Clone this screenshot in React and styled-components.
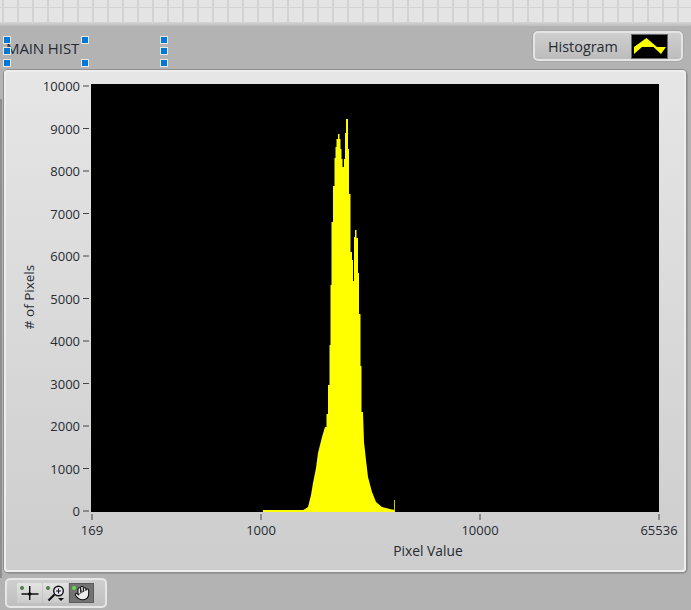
import React from 'react'
import styled, { createGlobalStyle } from 'styled-components'
import { Hand } from 'lucide-react'

const GlobalStyle = createGlobalStyle`
  html, body {
    margin: 0;
    height: 100%;
    background: #b3b3b3;
    overflow: hidden;
  }
  body {
    font-family: "Open Sans", "Noto Sans", sans-serif;
    font-size: 13px;
    color: #262b33;
  }
`

const Page = styled.div`
  position: relative;
  width: 691px;
  height: 610px;
  display: flex;
  flex-direction: column;
`

const GridStrip = styled.div`
  height: 22px;
  background-color: #e4e4e4;
  background-image:
    linear-gradient(to right, #d3d3d3 2px, transparent 2px),
    linear-gradient(to bottom, #d3d3d3 1px, transparent 1px);
  background-size: 15px 15px;
  background-position: 2px 7px;
`

const StripFade = styled.div`
  height: 4px;
  background: linear-gradient(#d6d6d6, #bdbdbd);
`

const EdgeBand = styled.div`
  position: absolute;
  left: 0;
  top: 99px;
  width: 2px;
  height: 479px;
  background: #8f8f8f;
`

const Header = styled.header`
  height: 44px;
  display: flex;
  align-items: flex-start;
  justify-content: space-between;
  padding: 0 8px 0 7px;
`

const LabelBox = styled.div`
  position: relative;
  margin-top: 13px;
  line-height: 18px;
  font-size: 15px;
  letter-spacing: -0.1px;
  margin-left: -1px;
`

const Handle = styled.span`
  position: absolute;
  left: ${p => p.$x - 3}px;
  top: ${p => p.$y - 4}px;
  width: 6px;
  height: 6px;
  background: #0078d7;
  border: 1px solid #e8e8e8;
`

const PlotSelector = styled.div`
  margin-top: 5px;
  width: 150px;
  height: 30px;
  box-sizing: border-box;
  display: flex;
  align-items: center;
  justify-content: space-between;
  padding: 0 14px 0 13px;
  border: 2px solid #e4e4e4;
  border-radius: 5px;
  background: linear-gradient(#cfcfcf, #bcbcbc);
  box-shadow: 0 0 0 1px #a8a8a8;
  font-size: 14.4px;
`

const Swatch = styled.svg`
  display: block;
  width: 35px;
  height: 23px;
  background: #000;
  outline: 1px solid #666;
`

const Panel = styled.section`
  margin: 0 5px 0 4px;
  height: 502px;
  border-radius: 4px;
  background: linear-gradient(#e6e6e6, #cdcdcd);
  box-shadow: inset 0 0 0 2px #eeeeee, 0 0 0 1px #8e8e8e, 1px 1px 1px 1px #999;
`

const Chart = styled.svg`
  display: block;
  width: 682px;
  height: 502px;
  font-family: "Open Sans", "Noto Sans", sans-serif;
  font-size: 13px;
  fill: #262b33;
`

const Tick = styled.line`
  stroke: #444;
  stroke-width: 1;
`

const Toolbar = styled.div`
  margin: 6px 0 0 5px;
  width: 102px;
  height: 30px;
  box-sizing: border-box;
  display: flex;
  gap: 1px;
  align-items: center;
  padding: 0 10px;
  border: 2px solid #e6e6e6;
  border-radius: 5px;
  background: linear-gradient(#cfcfcf, #bfbfbf);
`

const ToolButton = styled.div`
  position: relative;
  flex: 0 0 25px;
  height: 20px;
  display: flex;
  align-items: center;
  justify-content: center;
  background: ${p => (p.$active ? '#737373' : 'linear-gradient(#e4e4e4, #cacaca)')};
  box-shadow: ${p => (p.$active ? 'inset 0 0 0 1px #5c5c5c' : 'none')};
`

const Led = styled.span`
  position: absolute;
  left: 3px;
  top: 3px;
  width: 4px;
  height: 4px;
  border-radius: 50%;
  background: ${p => (p.$on ? '#5fe03a' : '#4d7d45')};
`

const ToolIcon = styled.svg`
  display: block;
  width: 25px;
  height: 20px;
`

const yValues = [10000, 9000, 8000, 7000, 6000, 5000, 4000, 3000, 2000, 1000, 0]
const xValues = [
  { label: '169', x: 92 },
  { label: '1000', x: 261 },
  { label: '10000', x: 480 },
  { label: '65536', x: 659 },
]

const histogram = `M263 512 V510 H303 L305 509 L308 507 L311 495 L313 483 L316 468 L318 453
  L320 445 L322 437 L325 427 H326.5 V414 H328 V385 H329.5 V345 H330.5 V285 H331.5 V222
  H333 V186 H334.5 V158 H335.5 V147 H336.5 V139 H338 V134 H339.5 V139 H340.5 V149
  H341.5 V159 H342.5 V167 H344 V159 H345 V133 H346 V119 H348 V149 H349 V194 H350.5 V252
  H352 V260 H353 V281 H354 V237 H355 V230 H356.5 V238 H358 V273 H359 V314 H360.5 V366
  H361.5 V412 H363 L364 442 L366 460 L368 477 L372 492 L376 502 L382 507 L392 509.5
  L395 510 V512 Z`

const HistChart = () => (
  <Chart viewBox="4 70 682 502">
    <rect x="91" y="84" width="568" height="428" fill="#000" />
    <path d={histogram} fill="#ffff00" />
    <rect x="394" y="500" width="1" height="11" fill="#c9c900" />

    {yValues.map((v, i) => {
      const y = 86 + i * 42.5
      return (
        <g key={v}>
          <Tick x1="83" x2="89" y1={y} y2={y} />
          <text x="80" y={y + 5} textAnchor="end">{v}</text>
        </g>
      )
    })}
    {xValues.map(t => (
      <g key={t.label}>
        <Tick x1={t.x} x2={t.x} y1="514" y2="520" />
        <text x={t.x} y="535" textAnchor="middle">{t.label}</text>
      </g>
    ))}

    <text x="428" y="556" textAnchor="middle" fontSize="13.8">Pixel Value</text>
    <text
      transform="translate(34 297) rotate(-90)"
      textAnchor="middle"
      fontSize="13.5"
    >
      # of Pixels
    </text>
  </Chart>
)

const App = () => (
  <Page>
    <GlobalStyle />
    <GridStrip />
    <StripFade />
    <EdgeBand />
    <Header>
      <LabelBox>
        MAIN HIST
        <Handle $x={0} $y={1} />
        <Handle $x={78} $y={1} />
        <Handle $x={157} $y={1} />
        <Handle $x={0} $y={12} />
        <Handle $x={157} $y={12} />
        <Handle $x={0} $y={24} />
        <Handle $x={78} $y={24} />
        <Handle $x={157} $y={24} />
      </LabelBox>
      <PlotSelector>
        Histogram
        <Swatch viewBox="0 0 35 23">
          <path d="M2 12 L14.5 3 L25 12 H34 L29 19 L21.5 12 H10 L2 19 Z" fill="#ffff00" />
        </Swatch>
      </PlotSelector>
    </Header>
    <Panel>
      <HistChart />
    </Panel>
    <Toolbar>
      <ToolButton>
        <Led />
        <ToolIcon viewBox="0 0 25 20">
          <path d="M4.5 11 H21.5 M12.7 3 V17" stroke="#111" strokeWidth="1.4" fill="none" />
          <circle cx="12.7" cy="11" r="1.8" fill="#111" />
        </ToolIcon>
      </ToolButton>
      <ToolButton>
        <Led />
        <ToolIcon viewBox="0 0 25 20">
          <circle cx="15.5" cy="8" r="4.8" fill="#e6e6f5" stroke="#111" strokeWidth="1.4" />
          <path d="M13 8 H18 M15.5 5.5 V10.5" stroke="#111" strokeWidth="1.1" />
          <path d="M11.5 11.5 L5.5 17.5" stroke="#111" strokeWidth="2.2" />
          <path d="M15 15 H21 L18 18 Z" fill="#111" />
        </ToolIcon>
      </ToolButton>
      <ToolButton $active>
        <Led $on />
        <Hand size={16} color="#111" fill="#eee" strokeWidth={1.6} />
      </ToolButton>
    </Toolbar>
  </Page>
)

export default App
